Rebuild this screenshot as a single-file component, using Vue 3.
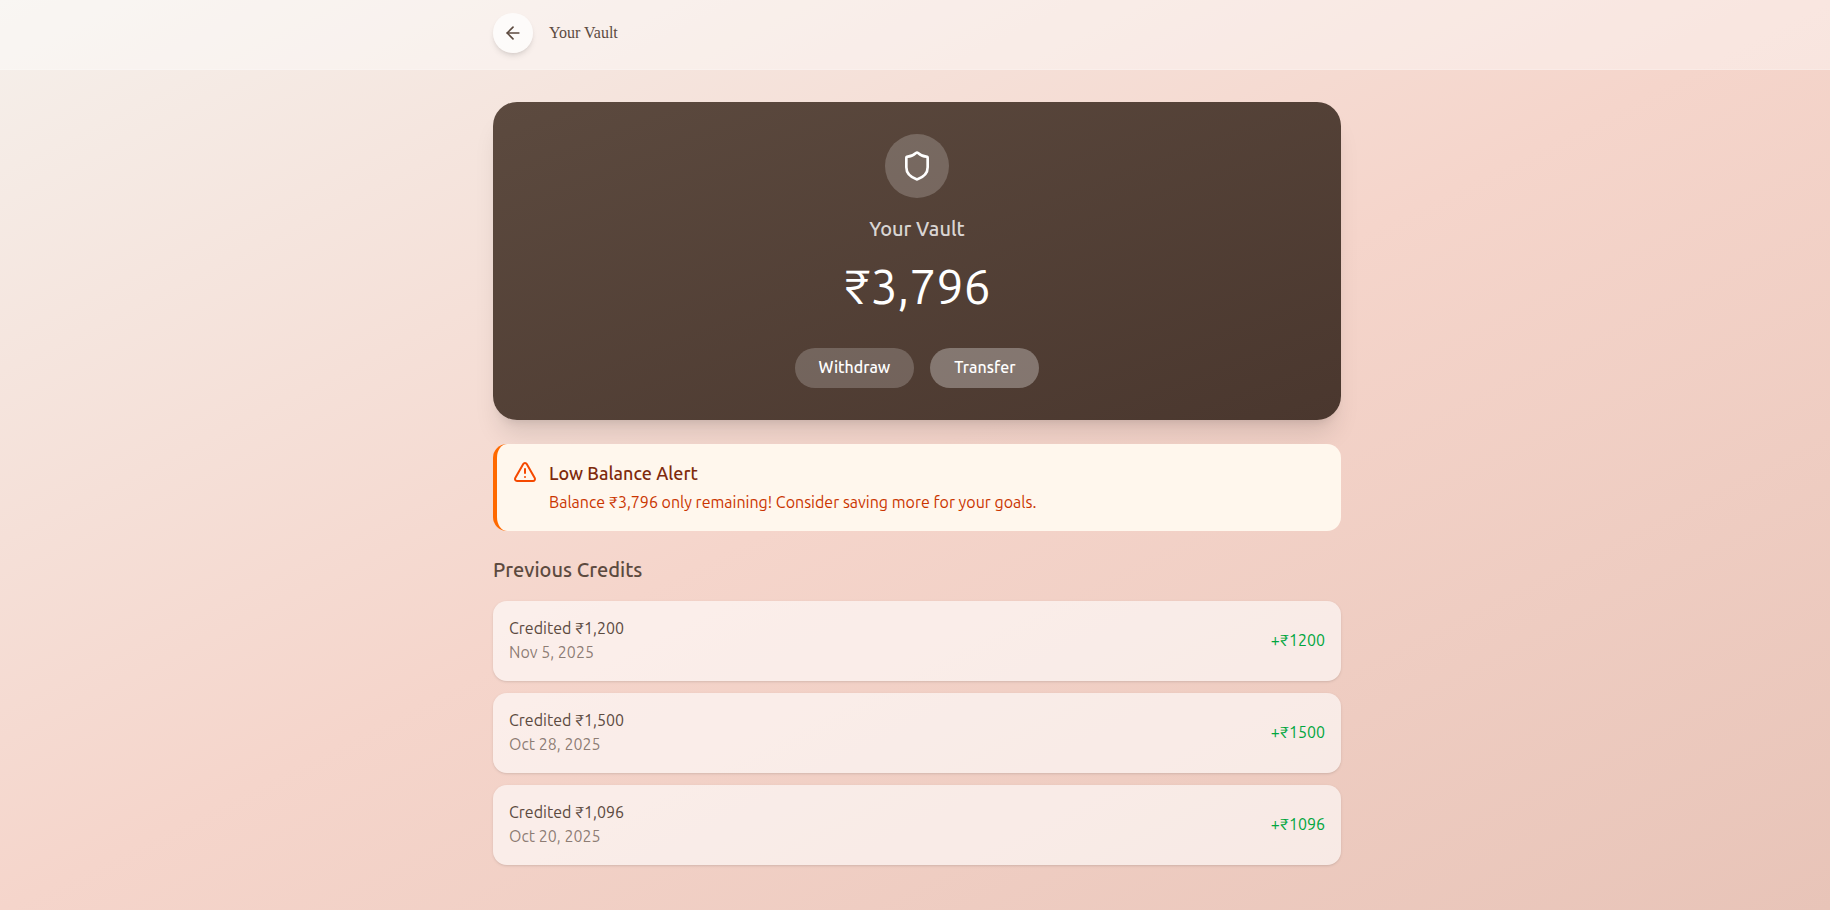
<template>
  <div class="page">
    <header class="topbar">
      <div class="container topbar-inner">
        <button type="button" class="back" aria-label="Go back">
          <svg viewBox="0 0 24 24" class="icon-back">
            <path d="m12 19-7-7 7-7" />
            <path d="M19 12H5" />
          </svg>
        </button>
        <h1>Your Vault</h1>
      </div>
    </header>

    <main class="container content">
      <section class="vault">
        <div class="vault-icon">
          <svg viewBox="0 0 24 24">
            <path d="M20 13c0 5-3.5 7.5-7.66 8.95a1 1 0 0 1-.67-.01C7.5 20.5 4 18 4 13V6a1 1 0 0 1 1-1c2 0 4.5-1.2 6.24-2.72a1.17 1.17 0 0 1 1.52 0C14.51 3.81 17 5 19 5a1 1 0 0 1 1 1z" />
          </svg>
        </div>
        <h2>Your Vault</h2>
        <p class="balance">₹{{ format(balance) }}</p>
        <div class="actions">
          <button type="button" class="withdraw">Withdraw</button>
          <button type="button" class="transfer">Transfer</button>
        </div>
      </section>

      <section class="alert" role="alert">
        <svg viewBox="0 0 24 24">
          <path d="m21.73 18-8-14a2 2 0 0 0-3.48 0l-8 14A2 2 0 0 0 4 21h16a2 2 0 0 0 1.73-3" />
          <path d="M12 9v4" />
          <path d="M12 17h.01" />
        </svg>
        <div>
          <h3>Low Balance Alert</h3>
          <p>Balance ₹{{ format(balance) }} only remaining! Consider saving more for your goals.</p>
        </div>
      </section>

      <section>
        <h2 class="credits-title">Previous Credits</h2>
        <ul class="credits">
          <li v-for="credit in credits" :key="credit.date">
            <div>
              <p class="credit-name">Credited ₹{{ format(credit.amount) }}</p>
              <p class="credit-date">{{ credit.date }}</p>
            </div>
            <span class="credit-amount">+₹{{ credit.amount }}</span>
          </li>
        </ul>
      </section>
    </main>
  </div>
</template>

<script setup>
import { ref } from 'vue'

const balance = ref(3796)

const credits = ref([
  { amount: 1200, date: 'Nov 5, 2025' },
  { amount: 1500, date: 'Oct 28, 2025' },
  { amount: 1096, date: 'Oct 20, 2025' },
])

function format(value) {
  return value.toLocaleString('en-IN')
}
</script>

<style>
body {
  margin: 0;
}
</style>

<style scoped>
.page {
  min-height: 100vh;
  box-sizing: border-box;
  padding-bottom: 32px;
  background: linear-gradient(to bottom right, #f5f0eb, #f5d5cb 50%, #e8c4b8);
  color: #5c4a3f;
  font-family: Ubuntu, 'Noto Sans', 'Open Sans', sans-serif;
  font-size: 16px;
  font-weight: 400;
  line-height: 24px;
}
h1, h2, h3, p, ul {
  margin: 0;
  padding: 0;
}
button {
  border: none;
  font: inherit;
  cursor: pointer;
}
svg {
  display: block;
  width: 24px;
  height: 24px;
  flex-shrink: 0;
  fill: none;
  stroke: currentColor;
  stroke-width: 2;
  stroke-linecap: round;
  stroke-linejoin: round;
}
.container {
  box-sizing: border-box;
  max-width: 900px;
  margin: 0 auto;
  padding-left: 28px;
  padding-right: 24px;
}
.topbar {
  padding: 13px 0 16px;
  background: rgba(255, 255, 255, 0.4);
  border-bottom: 1px solid rgba(255, 255, 255, 0.2);
}
.topbar-inner {
  display: flex;
  align-items: center;
  gap: 16px;
}
.topbar h1 {
  font-family: 'Liberation Serif', serif;
  font-size: 16px;
  font-weight: 400;
}
.back {
  display: flex;
  align-items: center;
  justify-content: center;
  width: 40px;
  height: 40px;
  padding: 0;
  border-radius: 50%;
  background: rgba(255, 255, 255, 0.7);
  color: #5c4a3f;
  box-shadow: 0 4px 6px -1px rgba(0, 0, 0, 0.1), 0 2px 4px -2px rgba(0, 0, 0, 0.1);
}
.icon-back {
  width: 20px;
  height: 20px;
}
.content {
  padding-top: 32px;
}
.vault {
  display: flex;
  flex-direction: column;
  align-items: center;
  padding: 32px;
  border-radius: 24px;
  background: linear-gradient(to bottom right, #5c4a3f, #4a372e);
  color: #fff;
  box-shadow: 0 20px 25px -5px rgba(0, 0, 0, 0.1), 0 8px 10px -6px rgba(0, 0, 0, 0.1);
}
.vault-icon {
  display: flex;
  align-items: center;
  justify-content: center;
  width: 64px;
  height: 64px;
  margin-bottom: 16px;
  border-radius: 50%;
  background: rgba(255, 255, 255, 0.2);
}
.vault-icon svg {
  width: 32px;
  height: 32px;
}
.vault h2 {
  margin-bottom: 8px;
  font-size: 20px;
  font-weight: 500;
  line-height: 30px;
  color: rgba(255, 255, 255, 0.8);
}
.balance {
  margin-bottom: 28px;
  font-size: 48px;
  line-height: 68px;
}
.actions {
  display: flex;
  gap: 16px;
}
.actions button {
  padding: 7px 24px 9px;
  border-radius: 20px;
  color: #fff;
  font-weight: 500;
}
.withdraw {
  background: rgba(255, 255, 255, 0.2);
}
.transfer {
  background: rgba(255, 255, 255, 0.3);
}
.alert {
  display: flex;
  align-items: flex-start;
  gap: 12px;
  margin: 24px 0;
  padding: 16px;
  border-left: 4px solid #ff6900;
  border-radius: 14px;
  background: #fff7ed;
  color: #ca3500;
}
.alert svg {
  color: #f54900;
}
.alert h3 {
  margin-bottom: 4px;
  font-size: 18px;
  font-weight: 500;
  line-height: 26px;
  color: #7e2a0c;
}
.alert p {
  margin-bottom: 1px;
}
.credits-title {
  margin-bottom: 16px;
  font-size: 20px;
  font-weight: 500;
  line-height: 30px;
}
.credits {
  display: flex;
  flex-direction: column;
  gap: 12px;
  list-style: none;
}
.credits li {
  display: flex;
  align-items: center;
  justify-content: space-between;
  padding: 15px 16px 17px;
  border-radius: 14px;
  background: rgba(255, 255, 255, 0.6);
  box-shadow: 0 1px 3px rgba(0, 0, 0, 0.1), 0 1px 2px -1px rgba(0, 0, 0, 0.1);
}
.credit-date {
  color: rgba(92, 74, 63, 0.7);
}
.credit-amount {
  color: #00a63e;
}
</style>
